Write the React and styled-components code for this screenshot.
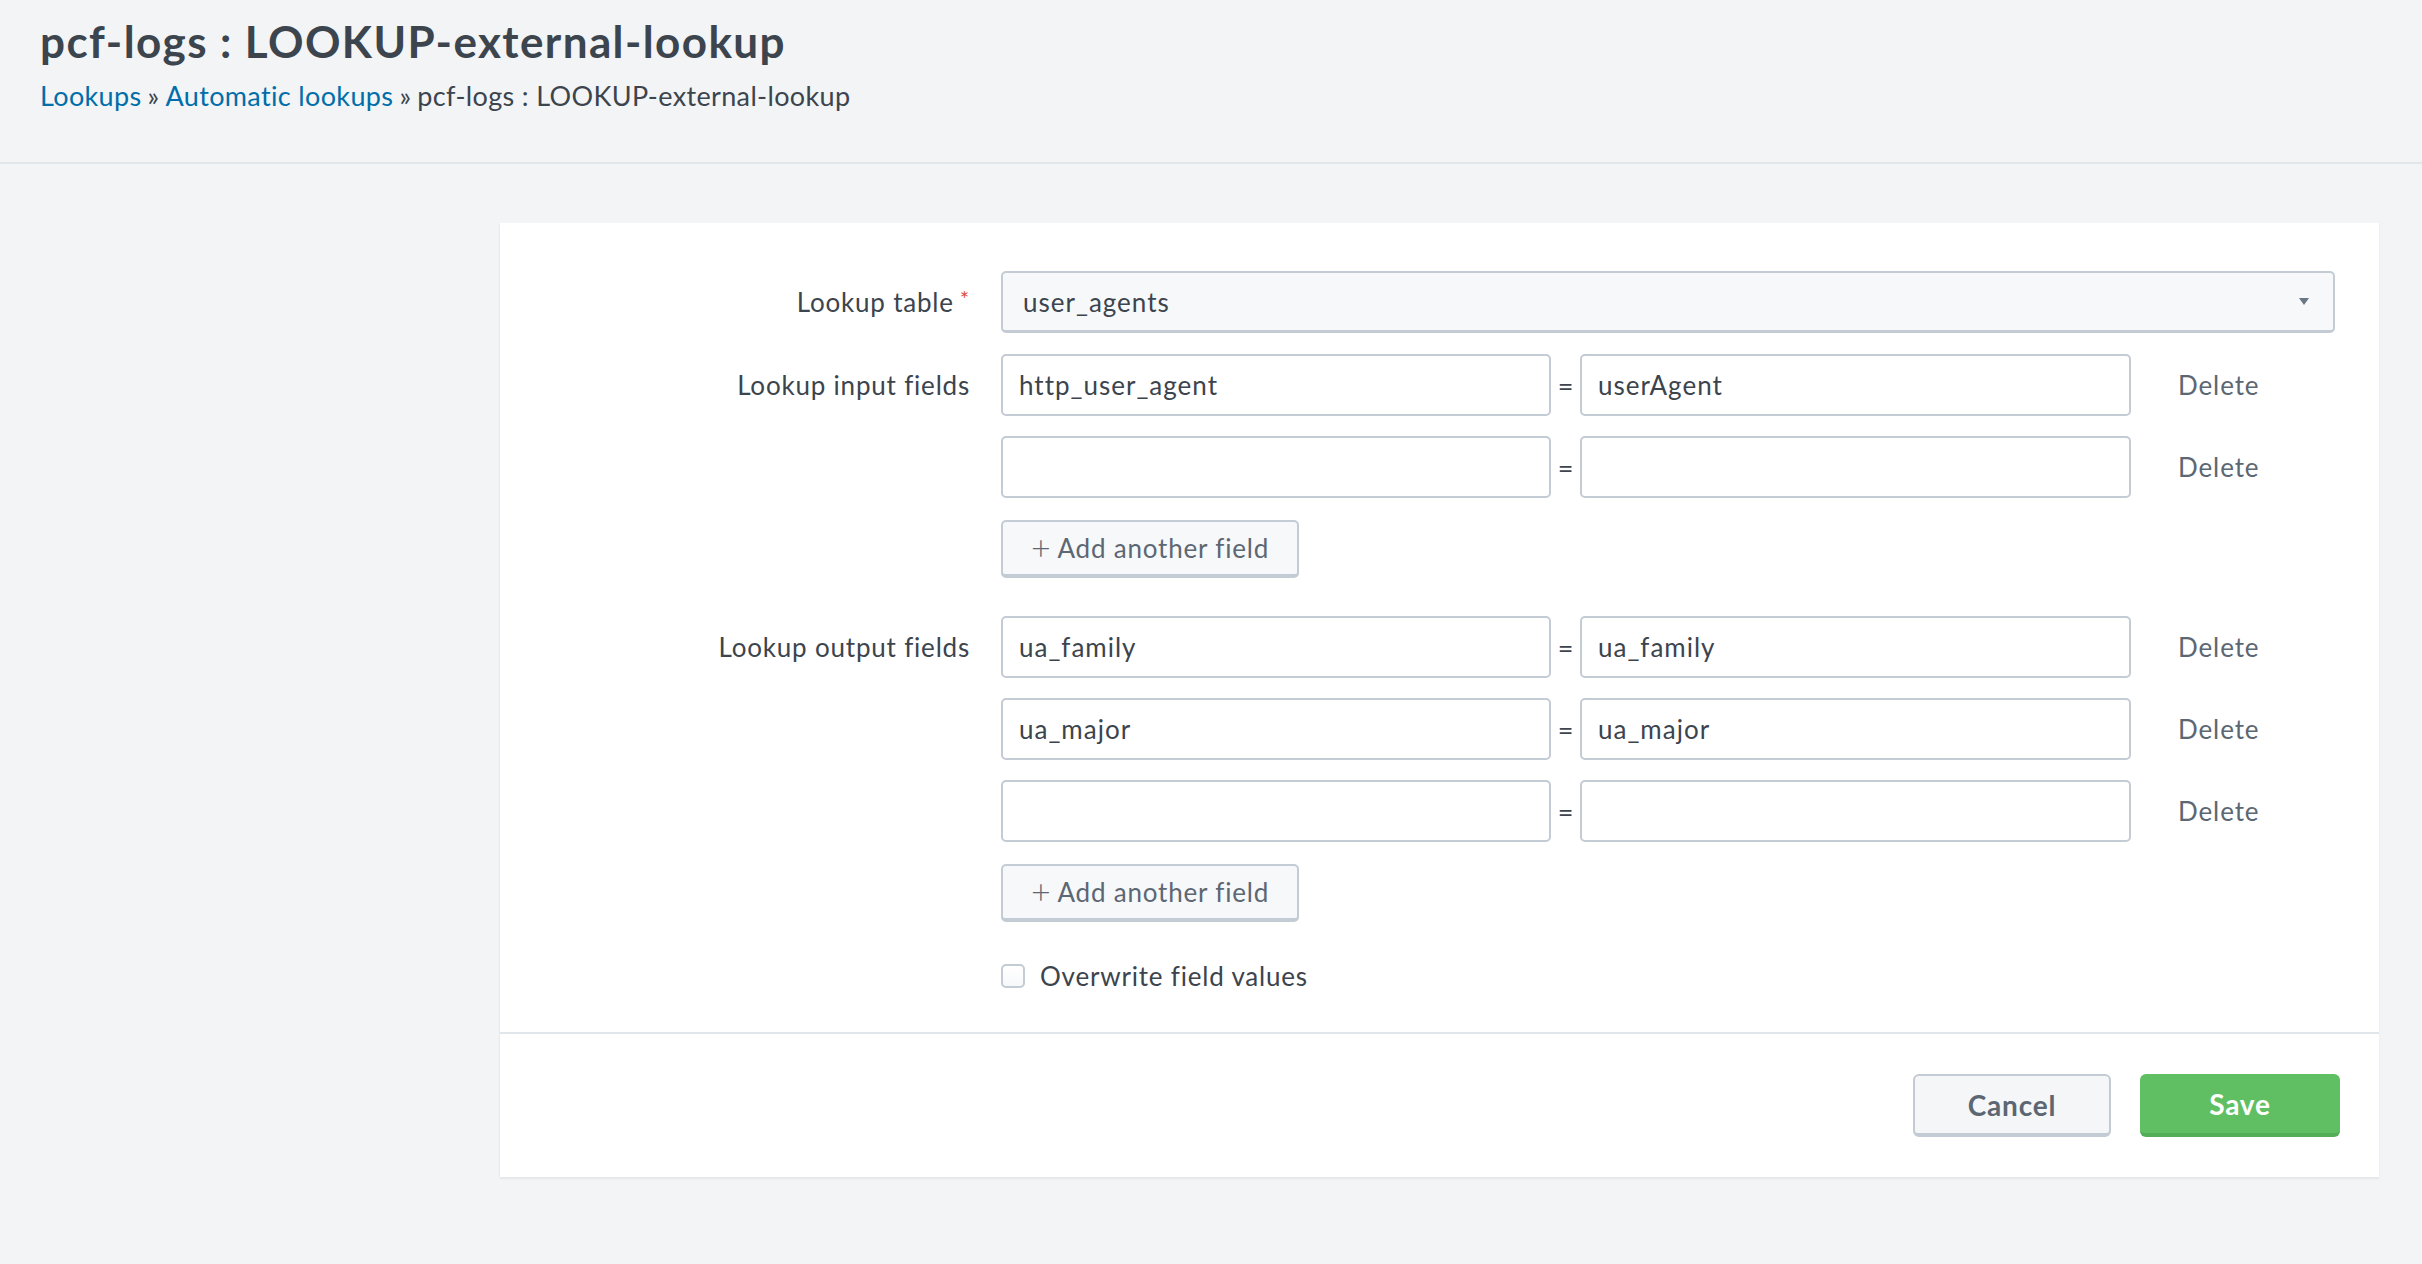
import React from "react";
import styled, { createGlobalStyle } from "styled-components";

const GlobalStyle = createGlobalStyle`
  html, body {
    margin: 0;
    padding: 0;
    background: #f2f4f5;
  }
  * {
    box-sizing: border-box;
  }
`;

const FONT = `Lato, "Liberation Sans", sans-serif`;

const Page = styled.div`
  min-height: 100vh;
  background: #f2f4f5;
  font-family: ${FONT};
  color: #3c444d;
`;

const Header = styled.header`
  height: 164px;
  padding: 11px 40px 0;
  border-bottom: 2px solid #e1e6eb;
`;

const Title = styled.h1`
  margin: 0;
  font-size: 44px;
  line-height: 60px;
  font-weight: 700;
  letter-spacing: 1.4px;
  color: #3c444d;
`;

const Breadcrumbs = styled.div`
  margin-top: 8px;
  font-size: 27px;
  line-height: 34px;
  letter-spacing: 0.35px;
  color: #3c444d;
`;

const Crumb = styled.a`
  color: #006eaa;
  text-decoration: none;
`;

const Sep = styled.span`
  margin: 0 6px;
`;

const Content = styled.main`
  padding: 59px 43px 40px 500px;
`;

const Card = styled.section`
  background: #fff;
  box-shadow: 0 2px 2px rgba(0, 0, 0, 0.06), -1px 0 0 #eceff2;
`;

const FormBody = styled.div`
  padding: 48px 44px 40px 0;
`;

const FieldGroup = styled.div`
  display: grid;
  grid-template-columns: 470px 1fr;
  column-gap: 31px;
  margin-bottom: ${(p) => p.$after || 0}px;
`;

const Label = styled.label`
  text-align: right;
  font-size: 26px;
  letter-spacing: 0.8px;
  line-height: 62px;
  color: #3c444d;
  white-space: nowrap;
`;

const Required = styled.span`
  color: #dc4e41;
  margin-left: 6px;
  font-size: 22px;
  vertical-align: top;
  line-height: 56px;
`;

const Controls = styled.div`
  display: flex;
  flex-direction: column;
  gap: 20px;
`;

const Select = styled.div`
  height: 62px;
  display: flex;
  align-items: center;
  justify-content: space-between;
  padding: 0 24px 0 20px;
  background: #f7f8fa;
  border: 2px solid #c3cbd4;
  border-bottom-width: 3px;
  border-radius: 5px;
  font-size: 26px;
  letter-spacing: 1px;
  color: #3c444d;
`;

const Caret = styled.span`
  width: 0;
  height: 0;
  border-left: 5px solid transparent;
  border-right: 5px solid transparent;
  border-top: 7px solid #6b7785;
`;

const PairRow = styled.div`
  display: flex;
  align-items: center;
`;

const TextInput = styled.div`
  width: ${(p) => p.$w}px;
  height: 62px;
  display: flex;
  align-items: center;
  padding: 0 16px;
  background: #fff;
  border: 2px solid #c3cbd4;
  border-radius: 5px;
  font-size: 26px;
  letter-spacing: 1px;
  color: #3c444d;
`;

const Equals = styled.span`
  width: 29px;
  text-align: center;
  font-size: 27px;
  color: #3c444d;
`;

const DeleteLink = styled.a`
  margin-left: 47px;
  font-size: 26px;
  letter-spacing: 0.9px;
  color: #5c6773;
  cursor: pointer;
`;

const AddButton = styled.button`
  align-self: flex-start;
  margin-top: 2px;
  width: 298px;
  height: 58px;
  background: #f7f8fa;
  border: 2px solid #c3cbd4;
  border-bottom-width: 4px;
  border-radius: 5px;
  font-family: ${FONT};
  font-size: 26px;
  letter-spacing: 0.8px;
  color: #5c6773;
  display: flex;
  align-items: center;
  justify-content: center;
  gap: 6px;
  cursor: pointer;
`;

const Plus = styled.span`
  font-size: 34px;
  font-weight: 300;
  line-height: 1;
  margin-top: -3px;
`;

const CheckRow = styled.div`
  display: flex;
  align-items: center;
  gap: 15px;
  font-size: 26px;
  letter-spacing: 0.8px;
  color: #3c444d;
`;

const CheckBox = styled.span`
  width: 24px;
  height: 24px;
  border: 2px solid #c3cbd4;
  border-radius: 5px;
  background: linear-gradient(#fff, #f7f8fa);
`;

const Footer = styled.footer`
  height: 145px;
  border-top: 2px solid #e1e6eb;
  display: flex;
  align-items: center;
  justify-content: flex-end;
  gap: 29px;
  padding-right: 39px;
`;

const FooterButton = styled.button`
  width: ${(p) => (p.$primary ? 200 : 198)}px;
  height: 63px;
  border-radius: 6px;
  font-family: ${FONT};
  font-size: 28px;
  font-weight: 700;
  letter-spacing: 0.8px;
  cursor: pointer;
  background: ${(p) => (p.$primary ? "#5fbf62" : "#f5f6f8")};
  color: ${(p) => (p.$primary ? "#fff" : "#5c6773")};
  border: ${(p) => (p.$primary ? "none" : "2px solid #c3cbd4")};
  border-bottom: ${(p) => (p.$primary ? "4px solid #53ac56" : "4px solid #c3cbd4")};
`;

const PairInput = ({ left, right }) => (
  <PairRow>
    <TextInput $w={550}>{left}</TextInput>
    <Equals>=</Equals>
    <TextInput $w={551}>{right}</TextInput>
    <DeleteLink>Delete</DeleteLink>
  </PairRow>
);

const inputFields = [
  ["http_user_agent", "userAgent"],
  ["", ""],
];

const outputFields = [
  ["ua_family", "ua_family"],
  ["ua_major", "ua_major"],
  ["", ""],
];

export default function App() {
  return (
    <Page>
      <GlobalStyle />
      <Header>
        <Title>pcf-logs : LOOKUP-external-lookup</Title>
        <Breadcrumbs>
          <Crumb href="#">Lookups</Crumb>
          <Sep>»</Sep>
          <Crumb href="#">Automatic lookups</Crumb>
          <Sep>»</Sep>
          pcf-logs : LOOKUP-external-lookup
        </Breadcrumbs>
      </Header>
      <Content>
        <Card>
          <FormBody>
            <FieldGroup $after={21}>
              <Label>
                Lookup table<Required>*</Required>
              </Label>
              <Controls>
                <Select>
                  user_agents
                  <Caret />
                </Select>
              </Controls>
            </FieldGroup>

            <FieldGroup $after={38}>
              <Label>Lookup input fields</Label>
              <Controls>
                {inputFields.map(([l, r], i) => (
                  <PairInput key={i} left={l} right={r} />
                ))}
                <AddButton>
                  <Plus>+</Plus>Add another field
                </AddButton>
              </Controls>
            </FieldGroup>

            <FieldGroup $after={38}>
              <Label>Lookup output fields</Label>
              <Controls>
                {outputFields.map(([l, r], i) => (
                  <PairInput key={i} left={l} right={r} />
                ))}
                <AddButton>
                  <Plus>+</Plus>Add another field
                </AddButton>
              </Controls>
            </FieldGroup>

            <FieldGroup>
              <span />
              <CheckRow>
                <CheckBox />
                Overwrite field values
              </CheckRow>
            </FieldGroup>
          </FormBody>
          <Footer>
            <FooterButton>Cancel</FooterButton>
            <FooterButton $primary>Save</FooterButton>
          </Footer>
        </Card>
      </Content>
    </Page>
  );
}
